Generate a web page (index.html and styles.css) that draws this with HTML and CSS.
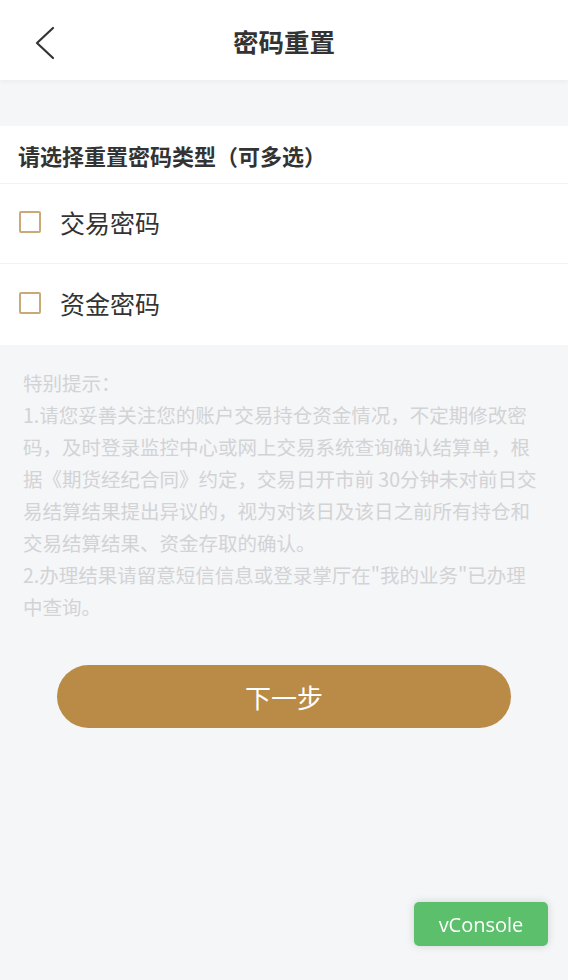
FILE: index.html
```html
<!DOCTYPE html>
<html lang="zh-CN">
<head>
    <meta charset="UTF-8">
    <meta name="viewport" content="width=device-width, initial-scale=1.0">
    <title>密码重置</title>
    <link rel="stylesheet" href="styles.css">
</head>
<body>
    <div class="header">
        <a class="back" href="#">
            <svg width="22" height="34" viewBox="0 0 22 34">
                <path d="M19 2 L3 17 L19 32" fill="none" stroke="#333" stroke-width="2.2" stroke-linecap="round" stroke-linejoin="round"/>
            </svg>
        </a>
        <h1>密码重置</h1>
    </div>

    <div class="section">
        <div class="section-title">请选择重置密码类型（可多选）</div>
        <label class="option">
            <span class="checkbox"></span>
            <span>交易密码</span>
        </label>
        <label class="option">
            <span class="checkbox"></span>
            <span>资金密码</span>
        </label>
    </div>

    <div class="notice">
        <p>特别提示：</p>
        <p>1.请您妥善关注您的账户交易持仓资金情况，不定期修改密码，及时登录监控中心或网上交易系统查询确认结算单，根据《期货经纪合同》约定，交易日开市前 30分钟未对前日交易结算结果提出异议的，视为对该日及该日之前所有持仓和交易结算结果、资金存取的确认。</p>
        <p>2.办理结果请留意短信信息或登录掌厅在"我的业务"已办理中查询。</p>
    </div>

    <div class="actions">
        <button class="next-btn">下一步</button>
    </div>

    <div class="vconsole">vConsole</div>
</body>
</html>
```

FILE: styles.css
```css
* {
    box-sizing: border-box;
    font-family: "Noto Sans CJK SC", "Noto Sans", sans-serif;
}

html, body {
    margin: 0;
    padding: 0;
}

body {
    background: #f5f6f8;
    min-height: 980px;
}

.header {
    height: 80px;
    background: white;
    display: flex;
    align-items: center;
    justify-content: center;
    position: relative;
    box-shadow: 0 2px 4px rgba(0,0,0,0.04);
}

.back {
    position: absolute;
    left: 34px;
    top: 26px;
    display: block;
    height: 34px;
}

h1 {
    margin: 0;
    font-size: 25.5px;
    font-weight: 700;
    color: #333;
}

.section {
    margin-top: 46px;
    background: white;
}

.section-title {
    height: 58px;
    padding-left: 18px;
    display: flex;
    align-items: center;
    font-size: 22px;
    font-weight: 700;
    color: #333;
    border-bottom: 1px solid #f2f2f2;
}

.option {
    height: 80px;
    padding-left: 19px;
    padding-bottom: 4px;
    display: flex;
    align-items: center;
    gap: 19px;
    font-size: 25px;
    color: #333;
    border-bottom: 1px solid #f2f2f2;
}

.option:last-child {
    border-bottom: none;
    height: 81px;
}

.checkbox {
    width: 22px;
    height: 22px;
    border: 2px solid #c9a978;
    border-radius: 2px;
}

.notice {
    padding: 22px 24px 0 23px;
    font-size: 19.5px;
    line-height: 32px;
    color: #d2d3d5;
}

.notice p {
    margin: 0;
}

.actions {
    padding: 42px 57px 0 57px;
}

.next-btn {
    width: 100%;
    height: 63px;
    border: none;
    border-radius: 32px;
    background: #b98b46;
    color: white;
    font-size: 26px;
    cursor: pointer;
}

.vconsole {
    position: fixed;
    right: 20px;
    bottom: 34px;
    width: 134px;
    height: 44px;
    border-radius: 5px;
    background: #5bbf6b;
    color: white;
    font-size: 20px;
    display: flex;
    align-items: center;
    justify-content: center;
    box-shadow: 0 0 8px rgba(0,0,0,0.15);
    font-family: "Open Sans", sans-serif;
}
```
